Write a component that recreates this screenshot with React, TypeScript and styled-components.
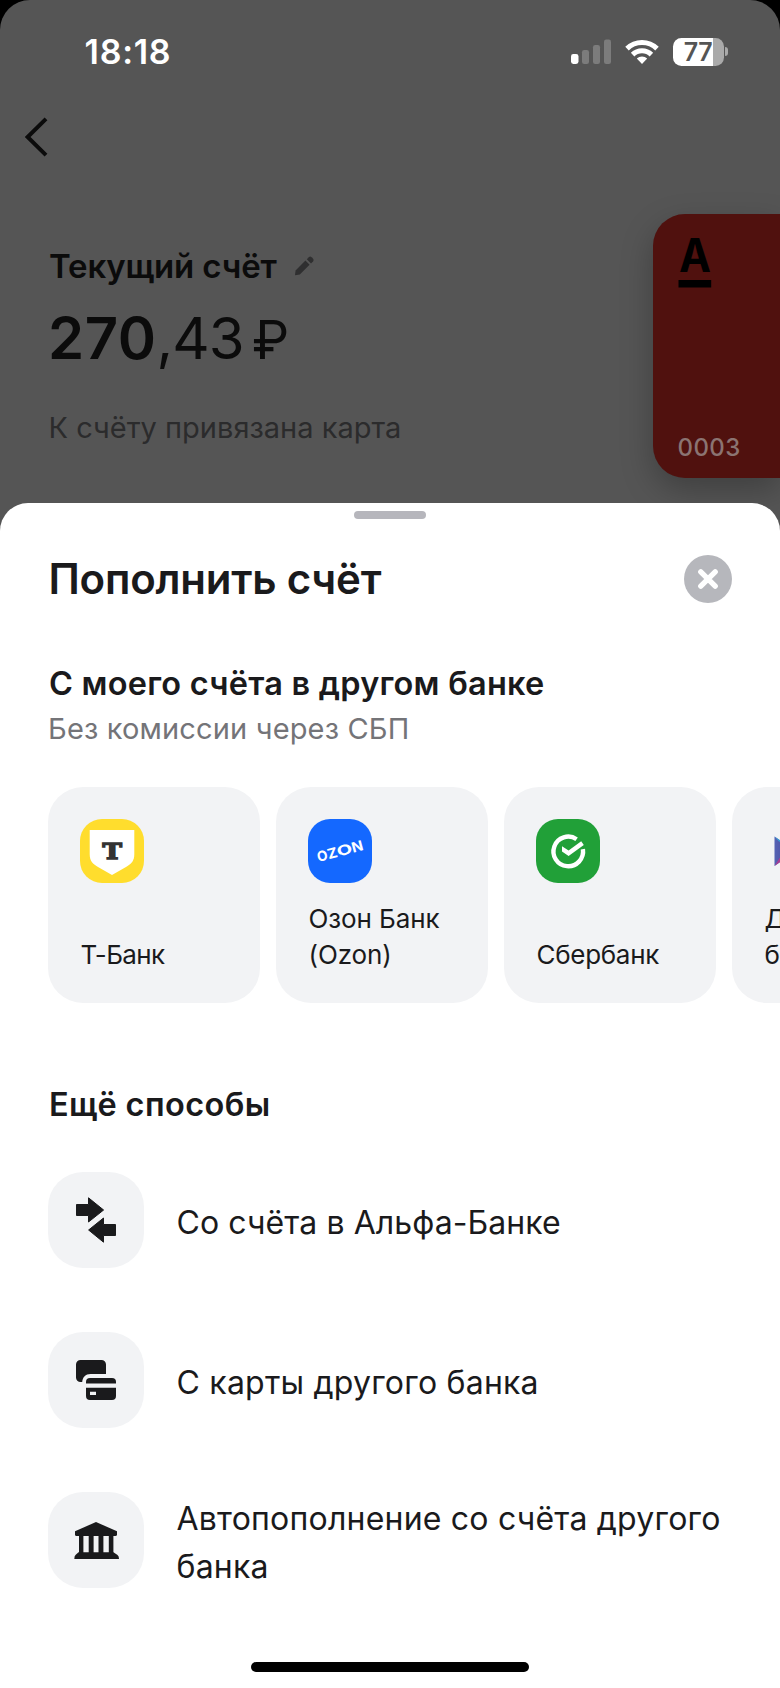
import React from "react";
import styled, { createGlobalStyle } from "styled-components";

const Global = createGlobalStyle`
  * { box-sizing: border-box; }
  body { margin: 0; background: #000; }
  h1, h2, p { margin: 0; }
  button { border: 0; padding: 0; background: none; font: inherit; color: inherit; text-align: left; }
  svg { display: block; flex: none; }
`;

const ink = "#1a1a1c";

const Screen = styled.main`
  width: 780px;
  height: 1688px;
  display: flex;
  flex-direction: column;
  overflow: hidden;
  background: #555;
  border-radius: 30px 30px 0 0;
  font-family: Inter, "Liberation Sans", sans-serif;
  color: ${ink};
`;

/* Dimmed account screen behind the sheet */
const Dimmed = styled.div`
  height: 502.5px;
  flex: none;
  color: #0b0b0b;
`;

const StatusBar = styled.div`
  height: 103px;
  padding: 0 52px 0 84.5px;
  display: flex;
  align-items: center;
  color: #fff;
`;

const Clock = styled.span`
  flex: 1;
  padding-top: 1px;
  font-size: 34px;
  font-weight: 600;
  line-height: 40px;
  letter-spacing: 0.75px;
`;

const StatusIcons = styled.div`
  display: flex;
  align-items: center;
  gap: 14px;
`;

const Battery = styled.div`
  display: flex;
  align-items: center;
  gap: 1.5px;
`;

const BatteryBody = styled.div`
  width: 51px;
  height: 28px;
  border-radius: 8.5px;
  background: linear-gradient(90deg, #fff 39.5px, #aaa 39.5px);
  color: #555;
  font-size: 25px;
  font-weight: 600;
  line-height: 28px;
  text-align: center;
  letter-spacing: -0.5px;
`;

const BatteryTip = styled.div`
  width: 3px;
  height: 9px;
  border-radius: 0 4px 4px 0;
  background: #aaa;
`;

const NavBar = styled.nav`
  height: 111px;
  padding: 14px 0 0 24px;
`;

const Account = styled.section`
  display: flex;
  justify-content: space-between;
  padding-left: 48px;
`;

const AccountInfo = styled.div`
  padding-top: 32px;
`;

const AccountName = styled.div`
  display: flex;
  align-items: center;
  gap: 17px;
  padding-left: 1px;
  font-size: 33px;
  font-weight: 600;
  line-height: 40px;
  letter-spacing: -0.15px;
`;

const Balance = styled.div`
  margin-top: 17px;
  height: 70px;
  font-size: 58px;
  line-height: 70px;
  letter-spacing: -0.95px;
  white-space: nowrap;
`;

const Whole = styled.span`
  font-weight: 600;
  letter-spacing: 0.5px;
`;

const Ruble = styled.span`
  margin-left: 8.5px;
  font-size: 53px;
`;

const LinkedNote = styled.p`
  margin-top: 36.5px;
  padding-left: 0.5px;
  font-size: 29px;
  line-height: 36px;
  color: #2b2b2c;
`;

const BankCard = styled.div`
  width: 127.5px;
  height: 263.5px;
  padding: 20px 0 14px 25px;
  display: flex;
  flex-direction: column;
  justify-content: space-between;
  border-radius: 32px 0 0 32px;
  background: #50110e;
  box-shadow: 0 12px 32px rgba(0, 0, 0, 0.26);
`;

const CardDigits = styled.span`
  font-size: 24px;
  font-weight: 500;
  line-height: 32px;
  letter-spacing: 0.4px;
  color: #8b7472;
`;

/* Bottom sheet */
const Sheet = styled.section`
  flex: 1;
  min-height: 0;
  padding-top: 8.5px;
  display: flex;
  flex-direction: column;
  background: #fff;
  border-radius: 28px 28px 0 0;
`;

const Handle = styled.div`
  width: 72px;
  height: 8px;
  flex: none;
  align-self: center;
  border-radius: 4px;
  background: #b6b6bc;
`;

const SheetHeader = styled.header`
  height: 48px;
  margin: 35.5px 48px 0;
  display: flex;
  justify-content: space-between;
`;

const SheetTitle = styled.h1`
  padding: 0.5px 0 0 0.5px;
  font-size: 42px;
  font-weight: 600;
  line-height: 48px;
  letter-spacing: -0.22px;
`;

const CloseButton = styled.button`
  width: 48px;
  height: 48px;
  border-radius: 50%;
  background: #b6b7bc;
`;

const SectionTitle = styled.h2<{ $top: number; $spacing: number }>`
  margin: ${(p) => p.$top}px 49px 0;
  font-size: 32.5px;
  font-weight: 600;
  line-height: 40px;
  letter-spacing: ${(p) => p.$spacing}px;
`;

const SectionNote = styled.p`
  margin: 6.5px 48px 0;
  font-size: 29px;
  line-height: 36px;
  letter-spacing: 0.16px;
  color: #747478;
`;

const BankList = styled.div`
  margin: 40.5px 0 0 48px;
  display: flex;
  gap: 16px;
  overflow: hidden;
`;

const BankTile = styled.button`
  width: 212px;
  height: 216px;
  flex: none;
  padding: 32px 30px 30.5px 32px;
  display: flex;
  flex-direction: column;
  justify-content: space-between;
  border-radius: 35px;
  background: #f2f3f5;
`;

const BankLabel = styled.span<{ $spacing?: number }>`
  padding-left: 0.5px;
  font-size: 26px;
  line-height: 36px;
  letter-spacing: ${(p) => p.$spacing ?? 0}px;
  white-space: pre-line;
`;

const MethodList = styled.div`
  margin: 47px 48px 0;
  display: flex;
  flex-direction: column;
  gap: 64px;
`;

const Method = styled.button`
  height: 96px;
  display: flex;
  align-items: center;
  gap: 32.5px;
`;

const MethodIcon = styled.span`
  width: 96px;
  height: 96px;
  flex: none;
  border-radius: 35px;
  background: #f2f3f5;
`;

const MethodLabel = styled.span<{ $spacing: number }>`
  padding-top: 5px;
  font-size: 32px;
  line-height: 48px;
  letter-spacing: ${(p) => p.$spacing}px;
`;

const HomeIndicator = styled.div`
  width: 278px;
  height: 10px;
  flex: none;
  margin: auto auto 16px;
  border-radius: 5px;
  background: #000;
`;

const Signal = () => (
  <svg width="40" height="26" viewBox="0 0 40 26" fill="#7c7c7c">
    <rect x="0" y="15" width="7.5" height="10" rx="2.4" fill="#fff" />
    <rect x="11" y="11" width="7" height="14" rx="2.2" />
    <rect x="22" y="6" width="7" height="19" rx="2.2" />
    <rect x="33" y="0.5" width="7" height="24.5" rx="2.2" />
  </svg>
);

const Wifi = () => (
  <svg width="34" height="26" viewBox="0 0 34 26" fill="none" stroke="#fff" strokeWidth="5">
    <path d="M2 9.6 A21.5 21.5 0 0 1 32 9.6" />
    <path d="M7.6 15.6 A13.4 13.4 0 0 1 26.4 15.6" />
    <path d="M17 25 L11.8 19.6 A7.4 7.4 0 0 1 22.2 19.6 Z" fill="#fff" stroke="none" />
  </svg>
);

const BackArrow = () => (
  <svg width="24" height="40" viewBox="0 0 24 40" fill="none" stroke="#0b0b0b" strokeWidth="4">
    <path d="M22 1.8 L3.6 20 L22 38.2" />
  </svg>
);

const Pencil = () => (
  <svg width="20" height="20" viewBox="0 0 20 20" fill="#2f2f30">
    <path d="M1 19.2 L1.6 14.4 L11.4 4.6 L15.6 8.8 L5.8 18.6 Z" />
    <path d="M12.8 3.2 L14.8 1.2 Q16.2 0 17.6 1.3 L18.9 2.6 Q20.2 4 19 5.4 L17 7.4 Z" />
  </svg>
);

const AlfaMark = () => (
  <svg width="34" height="56" viewBox="0 0 34 56" fill="#000">
    <text x="1" y="37.5" fontSize="46" fontWeight="700" textLength="32" lengthAdjust="spacingAndGlyphs">A</text>
    <rect x="0.5" y="46" width="32.7" height="7.5" />
  </svg>
);

const CloseMark = () => (
  <svg width="48" height="48" viewBox="0 0 48 48" fill="none" stroke="#fff" strokeWidth="5.4" strokeLinecap="round">
    <path d="M16.8 16.8 L31.2 31.2 M31.2 16.8 L16.8 31.2" />
  </svg>
);

const LogoBase = ({ color }: { color: string }) => (
  <rect width="64" height="64" rx="22" fill={color} stroke="none" />
);

const TBankLogo = () => (
  <svg width="64" height="64" viewBox="0 0 64 64">
    <LogoBase color="#ffdd2d" />
    <path d="M9.7 11 H54.3 V35 C54.3 42 51.5 44.8 46 48 L32 56 L18 48 C12.5 44.8 9.7 42 9.7 35 Z" fill="#fff" />
    <text
      x="22.4"
      y="40.4"
      fontSize="22.5"
      fontWeight="700"
      fontFamily="DejaVu Serif"
      fill="#333"
      stroke="#333"
      strokeWidth="1.5"
      textLength="19.4"
      lengthAdjust="spacingAndGlyphs"
    >
      T
    </text>
  </svg>
);

const OzonLogo = () => (
  <svg width="64" height="64" viewBox="0 0 64 64">
    <LogoBase color="#1468ff" />
    <g transform="rotate(-15 32 32)" fill="#fff" fontWeight="700">
      <text x="8.5" y="37" fontSize="14" textLength="10.5" lengthAdjust="spacingAndGlyphs">O</text>
      <text x="19" y="37" fontSize="14" textLength="10" lengthAdjust="spacingAndGlyphs">Z</text>
      <text x="28.8" y="37" fontSize="14" textLength="15.5" lengthAdjust="spacingAndGlyphs">O</text>
      <text x="44" y="37" fontSize="14" textLength="11.5" lengthAdjust="spacingAndGlyphs">N</text>
    </g>
  </svg>
);

const SberLogo = () => (
  <svg width="64" height="64" viewBox="0 0 64 64" fill="none" stroke="#fff" strokeWidth="4.4">
    <LogoBase color="#21a038" />
    <path d="M40.6 20.2 A14.8 14.8 0 1 0 46.9 30.2" />
    <path d="M26 27.2 L32.6 31.6 L45.2 22.2 L47.8 26 L32.6 37 L26 32.4 Z" fill="#fff" stroke="none" />
  </svg>
);

const DvLogo = () => (
  <svg width="64" height="64" viewBox="0 0 64 64">
    <defs>
      <linearGradient id="dv" x1="0" y1="0" x2="1" y2="0">
        <stop offset="0" stopColor="#5563b4" />
        <stop offset="1" stopColor="#4a3f96" />
      </linearGradient>
    </defs>
    <path d="M10.5 17.5 L32 32 L10.5 47 Z" fill="url(#dv)" />
    <path d="M10.5 17.5 L20 24 L15 22.5 Z" fill="#35a3d8" />
    <path d="M10.5 47 L20 40 L15.5 39 Z" fill="#a83d92" />
    <path d="M54 17.5 L32 32 L54 47 Z" fill="#a83d92" />
  </svg>
);

const TransferIcon = () => (
  <svg width="96" height="96" viewBox="0 0 96 96" fill={ink} stroke={ink} strokeWidth="1" strokeLinejoin="round">
    <path d="M28.5 32.5 H40.5 V25.8 L55.6 38 L40.5 50 V43.5 H28.5 Z" />
    <path d="M67.5 52.5 H55.5 V46 L40.6 58 L55.5 70.2 V63.5 H67.5 Z" />
  </svg>
);

const CardsIcon = () => (
  <svg width="96" height="96" viewBox="0 0 96 96" fill={ink}>
    <path d="M32.5 28 H53.5 A4.5 4.5 0 0 1 58 32.5 V42 H42.5 C37.5 42 34.7 45 34.2 50 H32.5 A4.5 4.5 0 0 1 28 45.5 V32.5 A4.5 4.5 0 0 1 32.5 28 Z" />
    <path d="M38 51.5 V50 A4 4 0 0 1 42 46 H64 A4 4 0 0 1 68 50 V51.5 Z" />
    <path fillRule="evenodd" d="M38 55.8 H68 V64 A4 4 0 0 1 64 68 H42 A4 4 0 0 1 38 64 Z M42 59.8 V63 H48 V59.8 Z" />
  </svg>
);

const BankIcon = () => (
  <svg width="96" height="96" viewBox="0 0 96 96" fill={ink}>
    <path d="M48 30 L69 39.3 V42.4 Q69 44 67.4 44 H28.6 Q27 44 27 42.4 V39.3 Z" />
    <path d="M31 43 H35.4 V61 H31 Z M40.7 43 H45.6 V61 H40.7 Z M50.5 43 H55.4 V61 H50.5 Z M60.8 43 H65.4 V61 H60.8 Z" />
    <path d="M30.5 60.3 H65.5 L69.5 63 Q71 64.2 71 67 H26.3 Q26.3 64.2 27.5 63 Z" />
  </svg>
);

const banks = [
  { name: "Т-Банк", logo: <TBankLogo />, spacing: -0.6 },
  { name: "Озон Банк\n(Ozon)", logo: <OzonLogo />, spacing: -0.1 },
  { name: "Сбербанк", logo: <SberLogo />, spacing: -0.3 },
  { name: "Дальневосточный\nбанк", logo: <DvLogo />, spacing: 0 },
];

const methods = [
  { label: "Со счёта в Альфа-Банке", icon: <TransferIcon />, spacing: 0.08 },
  { label: "С карты другого банка", icon: <CardsIcon />, spacing: 0.22 },
  { label: "Автопополнение со счёта другого банка", icon: <BankIcon />, spacing: 0.21 },
];

export default function App() {
  return (
    <>
      <Global />
      <Screen>
        <Dimmed>
          <StatusBar>
            <Clock>18:18</Clock>
            <StatusIcons>
              <Signal />
              <Wifi />
              <Battery>
                <BatteryBody>77</BatteryBody>
                <BatteryTip />
              </Battery>
            </StatusIcons>
          </StatusBar>
          <NavBar>
            <BackArrow />
          </NavBar>
          <Account>
            <AccountInfo>
              <AccountName>
                Текущий счёт
                <Pencil />
              </AccountName>
              <Balance>
                <Whole>270</Whole>,43<Ruble>₽</Ruble>
              </Balance>
              <LinkedNote>К счёту привязана карта</LinkedNote>
            </AccountInfo>
            <BankCard>
              <AlfaMark />
              <CardDigits>0003</CardDigits>
            </BankCard>
          </Account>
        </Dimmed>

        <Sheet>
          <Handle />
          <SheetHeader>
            <SheetTitle>Пополнить счёт</SheetTitle>
            <CloseButton aria-label="Закрыть">
              <CloseMark />
            </CloseButton>
          </SheetHeader>

          <SectionTitle $top={61.5} $spacing={0.23}>С моего счёта в другом банке</SectionTitle>
          <SectionNote>Без комиссии через СБП</SectionNote>
          <BankList>
            {banks.map((bank) => (
              <BankTile key={bank.name}>
                {bank.logo}
                <BankLabel $spacing={bank.spacing}>{bank.name}</BankLabel>
              </BankTile>
            ))}
          </BankList>

          <SectionTitle $top={82} $spacing={0.39}>Ещё способы</SectionTitle>
          <MethodList>
            {methods.map((method) => (
              <Method key={method.label}>
                <MethodIcon>{method.icon}</MethodIcon>
                <MethodLabel $spacing={method.spacing}>{method.label}</MethodLabel>
              </Method>
            ))}
          </MethodList>
          <HomeIndicator />
        </Sheet>
      </Screen>
    </>
  );
}
